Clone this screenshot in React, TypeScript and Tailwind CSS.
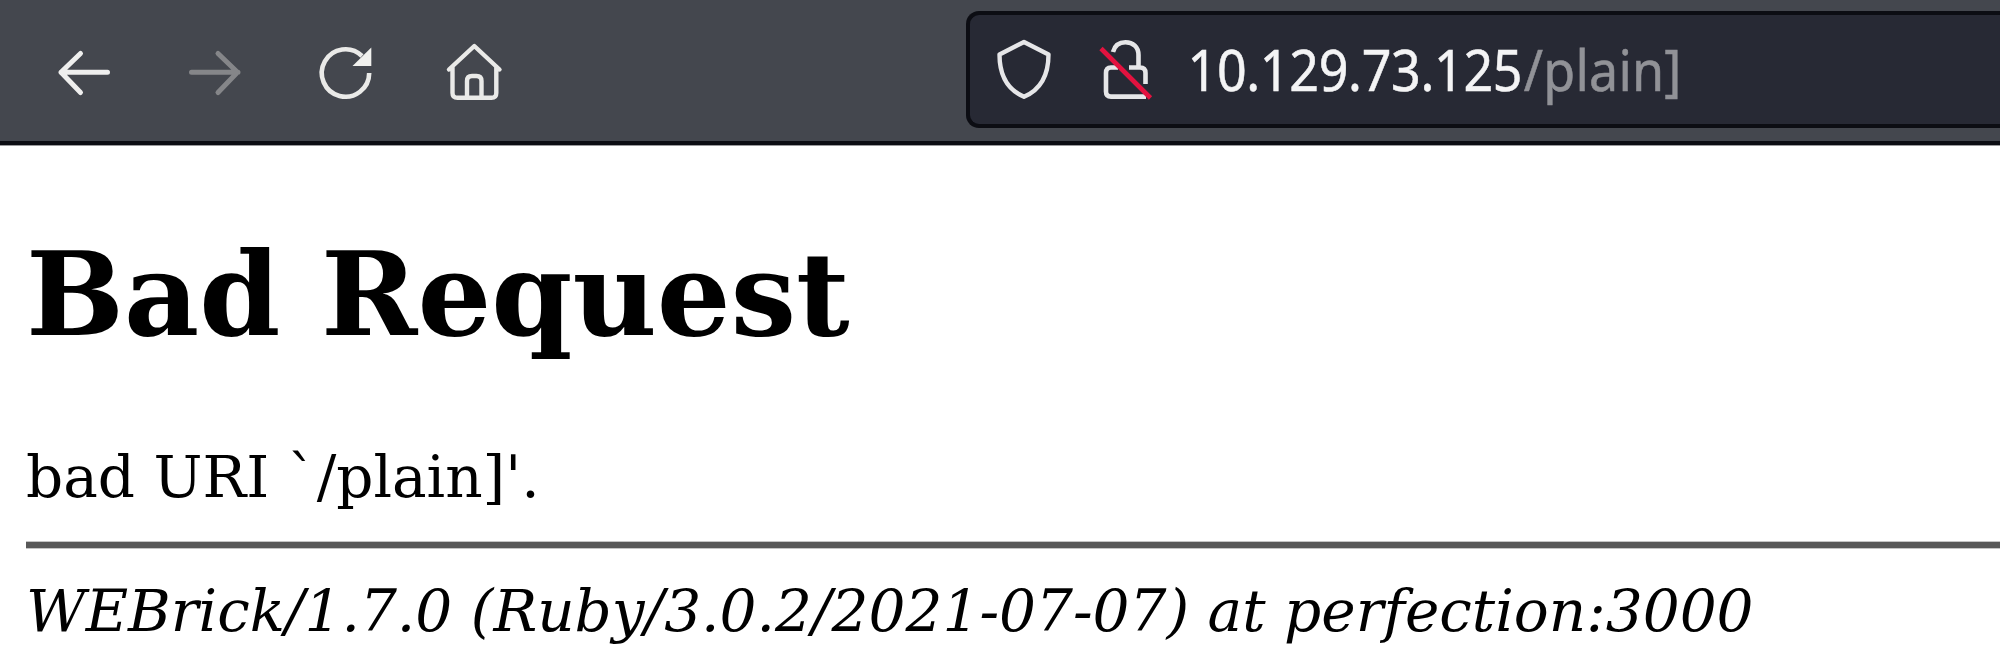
import React from "react";

const stroke = {
  fill: "none",
  strokeWidth: 4.6,
  strokeLinecap: "round" as const,
  strokeLinejoin: "round" as const,
};

function BackIcon() {
  return (
    <svg className="h-16 w-16" viewBox="52 39 64 64" stroke="#efefee" {...stroke} strokeWidth={5}>
      <path d="M107.500 71.300H61M80.500 52.500L61 71.300L80.500 91.500" />
    </svg>
  );
}

function ForwardIcon() {
  return (
    <svg className="h-16 w-16" viewBox="183 39 64 64" stroke="#858689" {...stroke} strokeWidth={5}>
      <path d="M191.500 71.300H238M218 52.500L237.500 71.300L218 91.500" />
    </svg>
  );
}

function ReloadIcon() {
  return (
    <svg className="h-16 w-16" viewBox="313 40 64 64" stroke="#eaeae8" {...stroke} strokeLinecap="butt">
      <path d="M369.200 73A23.700 23.700 0 1 1 362 56" />
      <path d="M371.300 47.500V66H352.500Z" fill="#f1f1ee" stroke="none" />
    </svg>
  );
}

function HomeIcon() {
  return (
    <svg className="h-16 w-16" viewBox="442 39 64 64" stroke="#eaeae8" {...stroke} strokeWidth={4.4}>
      <path d="M449 68.500L474.300 45L499.500 68.500M452.500 66V92Q452.500 96.800 457.500 96.800H491.500Q496.300 96.800 496.300 92V66" />
      <path d="M467 96V80Q467 75 472 75H476.500Q481.500 75 481.500 80V96" />
    </svg>
  );
}

function ShieldIcon() {
  return (
    <svg className="h-16 w-16" viewBox="992 38 64 64" stroke="#e6e6e8" {...stroke} strokeWidth={4.4}>
      <path d="M1024 42L1048.500 54.500C1048.500 75 1041 89.500 1024 96.800C1007 89.500 999.500 75 999.500 54.500Z" />
    </svg>
  );
}

function InsecureLockIcon() {
  return (
    <svg className="h-16 w-16" viewBox="1094 38 64 64" stroke="#e6e6e8" {...stroke} strokeLinecap="butt" strokeWidth={4.6}>
      <path d="M1113 52C1115 44.500 1120 42.300 1125.500 42.300C1133 42.300 1138.500 47 1138.500 55V67.500M1129 67.500H1140Q1145.500 67.500 1145.500 73V84M1118 67.500H1111Q1106 67.500 1106 73V91.500Q1106 96.600 1111 96.600H1146" />
      <path d="M1101 48.500L1150.500 98" stroke="#e3123f" />
    </svg>
  );
}

function Toolbar() {
  return (
    <header className="flex h-[145px] w-full items-start border-b-4 border-[#0c0d13] bg-[#44474e]">
      <nav className="flex shrink-0 pl-[52px] pt-10">
        <div className="flex w-[131px]"><BackIcon /></div>
        <div className="flex w-[130px]"><ForwardIcon /></div>
        <div className="flex w-[129px]"><ReloadIcon /></div>
        <div className="flex w-16"><HomeIcon /></div>
      </nav>
      <div className="ml-[460px] mt-[11px] flex h-[117px] flex-1 items-center rounded-l-[13px] border-4 border-r-0 border-[#0c0d13] bg-[#272934] pl-[22px]">
        <ShieldIcon />
        <div className="ml-[38px] flex"><InsecureLockIcon /></div>
        <p className="ml-[29.5px] mt-px origin-left scale-y-[1.07] whitespace-pre font-['Noto_Sans',sans-serif] text-[52px] leading-[72px] tracking-[-0.35px] text-[#f4f4f5] [-webkit-text-stroke:0.5px_currentColor]">
          10.129.73.125<span className="ml-[1.5px] tracking-[0.2px] text-[#919297]">/plain]</span>
        </p>
      </div>
    </header>
  );
}

export default function App() {
  return (
    <div className="h-[672px] w-full overflow-hidden bg-white font-['DejaVu_Serif',serif] text-black">
      <Toolbar />
      <main className="whitespace-nowrap border-t border-[#9a9a9c] pl-[26px] pt-20">
        <h1 className="text-[116.1px] font-bold leading-[136px]">Bad Request</h1>
        <p className="mt-[81px] text-[58.1px] leading-[68px]">bad URI `/plain]'.</p>
        <hr className="mt-[30px] h-2 border-0 border-y border-[#c4c4c4] bg-[#585858]" />
        <address className="mt-7 text-[58.1px] italic leading-[68px]">
          WEBrick/1.7.0 (Ruby/3.0.2/2021-07-07) at perfection:3000
        </address>
      </main>
    </div>
  );
}
